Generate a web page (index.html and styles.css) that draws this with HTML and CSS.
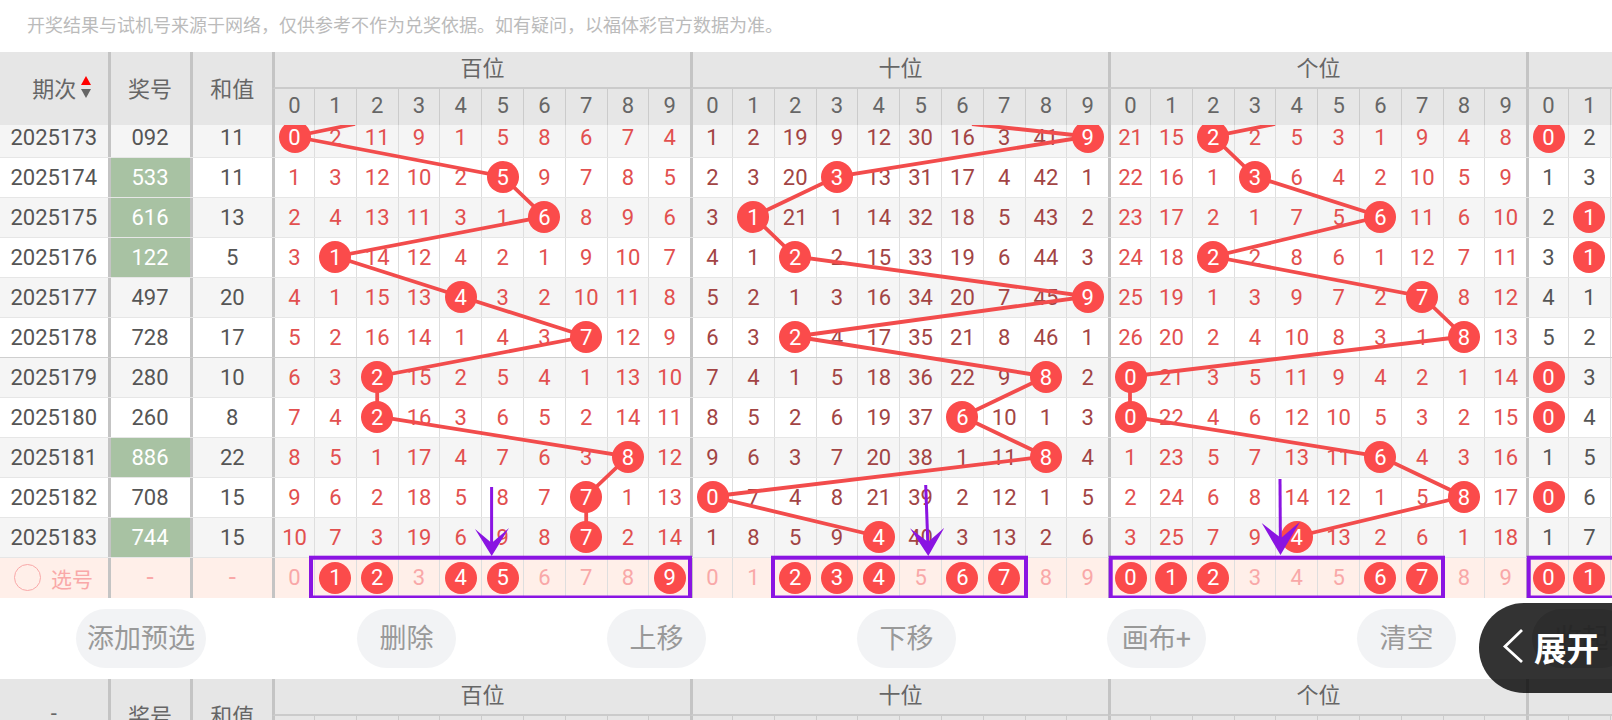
FILE: index.html
```html
<!DOCTYPE html>
<html lang="zh">
<head>
<meta charset="utf-8">
<title>走势图</title>
<link rel="stylesheet" href="styles.css">
</head>
<body>
<p class="note">开奖结果与试机号来源于网络，仅供参考不作为兑奖依据。如有疑问，以福体彩官方数据为准。</p>

<section class="head">
  <div class="num"><span>期次</span><span class="sort"><i class="up"></i><i class="down"></i></span></div>
  <div class="win">奖号</div>
  <div class="sum">和值</div>
  <div class="group"><div class="gname">百位</div><div class="sec"><span>0</span><span>1</span><span>2</span><span>3</span><span>4</span><span>5</span><span>6</span><span>7</span><span>8</span><span>9</span></div></div>
  <div class="group"><div class="gname">十位</div><div class="sec"><span>0</span><span>1</span><span>2</span><span>3</span><span>4</span><span>5</span><span>6</span><span>7</span><span>8</span><span>9</span></div></div>
  <div class="group"><div class="gname">个位</div><div class="sec"><span>0</span><span>1</span><span>2</span><span>3</span><span>4</span><span>5</span><span>6</span><span>7</span><span>8</span><span>9</span></div></div>
  <div class="group"><div class="gname"></div><div class="sec"><span>0</span><span>1</span></div></div>
</section>

<div class="rows">
  <svg class="lines" viewBox="0 125 1612 472.5" width="1612" height="472.5" aria-hidden="true">
    <polyline points="355,124 294,136.5 502.6,176.5 544.4,216.5 335.4,256.5 460.8,296.5 586.2,336.5 377.2,376.5 377.2,416.5 628,456.5 586.2,496.5 586.2,536.5"/>
    <polyline points="972,124 1087.8,136.5 837,176.5 753.4,216.5 795.2,256.5 1087.8,296.5 795.2,336.5 1046,376.5 962.4,416.5 1046,456.5 712,496.5 878.8,536.5"/>
    <polyline points="1275,124 1213.2,136.5 1255,176.5 1380.4,216.5 1213.2,256.5 1422.2,296.5 1464,336.5 1130,376.5 1130,416.5 1380.4,456.5 1464,496.5 1296.8,536.5"/>
  </svg>
  <svg class="marks" viewBox="0 125 1612 472.5" width="1612" height="472.5" aria-hidden="true">
    <rect x="311" y="557.7" width="379" height="39.8"/>
    <rect x="773" y="557.7" width="253" height="39.8"/>
    <rect x="1110.7" y="557.7" width="332.3" height="39.8"/>
    <rect x="1528.7" y="557.7" width="172" height="39.8"/>
    <line x1="491.6" y1="487" x2="491.6" y2="548"/>
    <polygon points="475,529 491.7,556 509,528 491.7,543"/>
    <line x1="925.7" y1="485" x2="928" y2="548"/>
    <polygon points="910,528.3 928.3,556 944.3,527.7 928,542"/>
    <line x1="1280" y1="479" x2="1280.4" y2="546"/>
    <polygon points="1261.7,523 1280.5,555 1300,521.7 1281,538"/>
  </svg>
  <div class="scroll">
    <div class="row"><div class="num">2025173</div><div class="win">092</div><div class="sum">11</div><div class="sec"><span><b>0</b></span><span>2</span><span>11</span><span>9</span><span>1</span><span>5</span><span>8</span><span>6</span><span>7</span><span>4</span></div><div class="sec dark"><span>1</span><span>2</span><span>19</span><span>9</span><span>12</span><span>30</span><span>16</span><span>3</span><span>41</span><span><b>9</b></span></div><div class="sec"><span>21</span><span>15</span><span><b>2</b></span><span>2</span><span>5</span><span>3</span><span>1</span><span>9</span><span>4</span><span>8</span></div><div class="sec gray"><span><b>0</b></span><span>2</span></div></div>
    <div class="row"><div class="num">2025174</div><div class="win hit">533</div><div class="sum">11</div><div class="sec"><span>1</span><span>3</span><span>12</span><span>10</span><span>2</span><span><b>5</b></span><span>9</span><span>7</span><span>8</span><span>5</span></div><div class="sec dark"><span>2</span><span>3</span><span>20</span><span><b>3</b></span><span>13</span><span>31</span><span>17</span><span>4</span><span>42</span><span>1</span></div><div class="sec"><span>22</span><span>16</span><span>1</span><span><b>3</b></span><span>6</span><span>4</span><span>2</span><span>10</span><span>5</span><span>9</span></div><div class="sec gray"><span>1</span><span>3</span></div></div>
    <div class="row"><div class="num">2025175</div><div class="win hit">616</div><div class="sum">13</div><div class="sec"><span>2</span><span>4</span><span>13</span><span>11</span><span>3</span><span>1</span><span><b>6</b></span><span>8</span><span>9</span><span>6</span></div><div class="sec dark"><span>3</span><span><b>1</b></span><span>21</span><span>1</span><span>14</span><span>32</span><span>18</span><span>5</span><span>43</span><span>2</span></div><div class="sec"><span>23</span><span>17</span><span>2</span><span>1</span><span>7</span><span>5</span><span><b>6</b></span><span>11</span><span>6</span><span>10</span></div><div class="sec gray"><span>2</span><span><b>1</b></span></div></div>
    <div class="row"><div class="num">2025176</div><div class="win hit">122</div><div class="sum">5</div><div class="sec"><span>3</span><span><b>1</b></span><span>14</span><span>12</span><span>4</span><span>2</span><span>1</span><span>9</span><span>10</span><span>7</span></div><div class="sec dark"><span>4</span><span>1</span><span><b>2</b></span><span>2</span><span>15</span><span>33</span><span>19</span><span>6</span><span>44</span><span>3</span></div><div class="sec"><span>24</span><span>18</span><span><b>2</b></span><span>2</span><span>8</span><span>6</span><span>1</span><span>12</span><span>7</span><span>11</span></div><div class="sec gray"><span>3</span><span><b>1</b></span></div></div>
    <div class="row"><div class="num">2025177</div><div class="win">497</div><div class="sum">20</div><div class="sec"><span>4</span><span>1</span><span>15</span><span>13</span><span><b>4</b></span><span>3</span><span>2</span><span>10</span><span>11</span><span>8</span></div><div class="sec dark"><span>5</span><span>2</span><span>1</span><span>3</span><span>16</span><span>34</span><span>20</span><span>7</span><span>45</span><span><b>9</b></span></div><div class="sec"><span>25</span><span>19</span><span>1</span><span>3</span><span>9</span><span>7</span><span>2</span><span><b>7</b></span><span>8</span><span>12</span></div><div class="sec gray"><span>4</span><span>1</span></div></div>
    <div class="row fifth"><div class="num">2025178</div><div class="win">728</div><div class="sum">17</div><div class="sec"><span>5</span><span>2</span><span>16</span><span>14</span><span>1</span><span>4</span><span>3</span><span><b>7</b></span><span>12</span><span>9</span></div><div class="sec dark"><span>6</span><span>3</span><span><b>2</b></span><span>4</span><span>17</span><span>35</span><span>21</span><span>8</span><span>46</span><span>1</span></div><div class="sec"><span>26</span><span>20</span><span>2</span><span>4</span><span>10</span><span>8</span><span>3</span><span>1</span><span><b>8</b></span><span>13</span></div><div class="sec gray"><span>5</span><span>2</span></div></div>
    <div class="row"><div class="num">2025179</div><div class="win">280</div><div class="sum">10</div><div class="sec"><span>6</span><span>3</span><span><b>2</b></span><span>15</span><span>2</span><span>5</span><span>4</span><span>1</span><span>13</span><span>10</span></div><div class="sec dark"><span>7</span><span>4</span><span>1</span><span>5</span><span>18</span><span>36</span><span>22</span><span>9</span><span><b>8</b></span><span>2</span></div><div class="sec"><span><b>0</b></span><span>21</span><span>3</span><span>5</span><span>11</span><span>9</span><span>4</span><span>2</span><span>1</span><span>14</span></div><div class="sec gray"><span><b>0</b></span><span>3</span></div></div>
    <div class="row"><div class="num">2025180</div><div class="win">260</div><div class="sum">8</div><div class="sec"><span>7</span><span>4</span><span><b>2</b></span><span>16</span><span>3</span><span>6</span><span>5</span><span>2</span><span>14</span><span>11</span></div><div class="sec dark"><span>8</span><span>5</span><span>2</span><span>6</span><span>19</span><span>37</span><span><b>6</b></span><span>10</span><span>1</span><span>3</span></div><div class="sec"><span><b>0</b></span><span>22</span><span>4</span><span>6</span><span>12</span><span>10</span><span>5</span><span>3</span><span>2</span><span>15</span></div><div class="sec gray"><span><b>0</b></span><span>4</span></div></div>
    <div class="row"><div class="num">2025181</div><div class="win hit">886</div><div class="sum">22</div><div class="sec"><span>8</span><span>5</span><span>1</span><span>17</span><span>4</span><span>7</span><span>6</span><span>3</span><span><b>8</b></span><span>12</span></div><div class="sec dark"><span>9</span><span>6</span><span>3</span><span>7</span><span>20</span><span>38</span><span>1</span><span>11</span><span><b>8</b></span><span>4</span></div><div class="sec"><span>1</span><span>23</span><span>5</span><span>7</span><span>13</span><span>11</span><span><b>6</b></span><span>4</span><span>3</span><span>16</span></div><div class="sec gray"><span>1</span><span>5</span></div></div>
    <div class="row"><div class="num">2025182</div><div class="win">708</div><div class="sum">15</div><div class="sec"><span>9</span><span>6</span><span>2</span><span>18</span><span>5</span><span>8</span><span>7</span><span><b>7</b></span><span>1</span><span>13</span></div><div class="sec dark"><span><b>0</b></span><span>7</span><span>4</span><span>8</span><span>21</span><span>39</span><span>2</span><span>12</span><span>1</span><span>5</span></div><div class="sec"><span>2</span><span>24</span><span>6</span><span>8</span><span>14</span><span>12</span><span>1</span><span>5</span><span><b>8</b></span><span>17</span></div><div class="sec gray"><span><b>0</b></span><span>6</span></div></div>
    <div class="row"><div class="num">2025183</div><div class="win hit">744</div><div class="sum">15</div><div class="sec"><span>10</span><span>7</span><span>3</span><span>19</span><span>6</span><span>9</span><span>8</span><span><b>7</b></span><span>2</span><span>14</span></div><div class="sec dark"><span>1</span><span>8</span><span>5</span><span>9</span><span><b>4</b></span><span>40</span><span>3</span><span>13</span><span>2</span><span>6</span></div><div class="sec"><span>3</span><span>25</span><span>7</span><span>9</span><span><b>4</b></span><span>13</span><span>2</span><span>6</span><span>1</span><span>18</span></div><div class="sec gray"><span>1</span><span>7</span></div></div>
    <div class="row pick"><div class="num"><i class="ring"></i>选号</div><div class="win">-</div><div class="sum">-</div><div class="sec"><span>0</span><span><b>1</b></span><span><b>2</b></span><span>3</span><span><b>4</b></span><span><b>5</b></span><span>6</span><span>7</span><span>8</span><span><b>9</b></span></div><div class="sec"><span>0</span><span>1</span><span><b>2</b></span><span><b>3</b></span><span><b>4</b></span><span>5</span><span><b>6</b></span><span><b>7</b></span><span>8</span><span>9</span></div><div class="sec"><span><b>0</b></span><span><b>1</b></span><span><b>2</b></span><span>3</span><span>4</span><span>5</span><span><b>6</b></span><span><b>7</b></span><span>8</span><span>9</span></div><div class="sec"><span><b>0</b></span><span><b>1</b></span></div></div>
  </div>
</div>

<div class="actions">
  <button class="btn wide">添加预选</button>
  <button class="btn">删除</button>
  <button class="btn">上移</button>
  <button class="btn">下移</button>
  <button class="btn">画布+</button>
  <button class="btn">清空</button>
  <button class="btn last">收起</button>
</div>

<section class="head">
  <div class="num">-</div>
  <div class="win">奖号</div>
  <div class="sum">和值</div>
  <div class="group"><div class="gname">百位</div><div class="sec"><span>0</span><span>1</span><span>2</span><span>3</span><span>4</span><span>5</span><span>6</span><span>7</span><span>8</span><span>9</span></div></div>
  <div class="group"><div class="gname">十位</div><div class="sec"><span>0</span><span>1</span><span>2</span><span>3</span><span>4</span><span>5</span><span>6</span><span>7</span><span>8</span><span>9</span></div></div>
  <div class="group"><div class="gname">个位</div><div class="sec"><span>0</span><span>1</span><span>2</span><span>3</span><span>4</span><span>5</span><span>6</span><span>7</span><span>8</span><span>9</span></div></div>
  <div class="group"><div class="gname"></div><div class="sec"><span>0</span><span>1</span></div></div>
</section>

<div class="pill">
  <svg viewBox="0 0 22 36" width="22" height="36" aria-hidden="true"><path d="M20 2 L3 18.5 L20 34"/></svg>
  <span>展开</span>
</div>
</body>
</html>
```

FILE: styles.css
```css
* { box-sizing: border-box; }
html, body { margin: 0; padding: 0; height: 720px; overflow: hidden; background: #fff; }
body {
  position: relative;
  width: 1612px;
  font-family: Roboto, "Noto Sans CJK SC", sans-serif;
  font-size: 22px;
  color: #555;
}
.note {
  margin: 0;
  height: 52px;
  padding-left: 27px;
  font-size: 18px;
  line-height: 51px;
  color: #bbb;
  white-space: nowrap;
}

/* shared columns */
.head, .row { display: flex; width: 1612px; overflow: hidden; }
.num, .win, .sum {
  flex: none;
  display: flex;
  align-items: center;
  justify-content: center;
}
.num { width: 107.5px; }
.win { width: 82px; border-left: 3.5px solid #c4c4c4; }
.sum { width: 82.5px; border-left: 3.5px solid #c4c4c4; }
.sec {
  flex: none;
  display: grid;
  grid-template-columns: 43px repeat(8, 41.8px) 40.6px;
  width: 418px;
}
.sec > span {
  display: flex;
  align-items: center;
  justify-content: center;
  border-right: 1.5px solid #dedede;
}
.sec > span:first-child { border-left: 3px solid #c4c4c4; }
.sec > span:nth-child(10) { border-right: 0; }

/* header */
.head { height: 73px; background: #e6e6e6; color: #666; }
.head .num, .head .win, .head .sum { padding-bottom: 4px; }
.group { flex: none; width: 418px; display: flex; flex-direction: column; }
.gname {
  height: 37px;
  border-left: 3px solid #c4c4c4;
  border-bottom: 2px solid #cbcbcb;
  text-align: center;
  line-height: 33px;
}
.head .sec { height: 36px; }
.head .sec > span { border-right-color: #cbcbcb; padding-bottom: 3px; }
.num > span:first-child { margin-left: 16px; }
.sort { display: flex; flex-direction: column; gap: 4px; margin-left: 5px; }
.sort i { display: block; width: 0; height: 0; border-left: 5.5px solid transparent; border-right: 5.5px solid transparent; }
.sort .up { border-bottom: 9px solid #f00; }
.sort .down { border-top: 9px solid #666; }

/* rows */
.rows { position: relative; height: 472.5px; overflow: hidden; }
.scroll { margin-top: -7.5px; }
.row { height: 40px; border-bottom: 1.5px solid #e6e6e6; background: #fff; }
.row:nth-child(odd) { background: #f5f5f5; }
.row.fifth { border-bottom-color: #cfcfcf; }
.row .sec { color: #e2504f; }
.row .sec.dark { color: #a24444; }
.row .sec.gray { color: #555; }
.win.hit { background-clip: padding-box; background-color: #a8c2a3; color: #fff; }
.sec b {
  position: relative;
  z-index: 2;
  display: flex;
  align-items: center;
  justify-content: center;
  width: 32px;
  height: 32px;
  border-radius: 50%;
  background: #fb4b4b;
  color: #fff;
  font-weight: 400;
}
.lines, .marks { position: absolute; left: 0; top: 0; }
.lines { z-index: 1; }
.lines polyline { fill: none; stroke: #f24c4c; stroke-width: 3.8; }
.marks { z-index: 3; }
.marks rect { fill: none; stroke: #8a14e2; stroke-width: 4; }
.marks line { stroke: #8a14e2; stroke-width: 3; }
.marks polygon { fill: #8a14e2; }

/* pick row */
.row.pick { background: #ffefe9; border-bottom: 0; color: #f9a8a8; }
.row.pick .sec { color: #f9a8a8; }
.row.pick .num { font-size: 21px; justify-content: flex-start; padding-left: 14px; }
.row.pick .win, .row.pick .sum { font-size: 26px; padding-bottom: 2px; }
.ring {
  width: 27px;
  height: 27px;
  margin-right: 10px;
  border: 1.5px solid #f9a8a8;
  border-radius: 50%;
}

/* actions */
.actions {
  display: flex;
  align-items: center;
  gap: 151px;
  height: 81.5px;
  padding: 0 0 0 76px;
  width: 1800px;
}
.btn {
  flex: none;
  width: 99px;
  height: 59px;
  padding: 0 0 3px;
  border: 0;
  border-radius: 30px;
  background: #f2f3f5;
  color: #999;
  font: inherit;
  font-size: 27px;
}
.btn.wide { width: 130px; }
.btn.last { margin-left: -75px; background: #dedede; color: #c8c8c8; }

/* floating */
.pill {
  position: absolute;
  right: 0;
  top: 603px;
  z-index: 10;
  display: flex;
  align-items: center;
  width: 133px;
  height: 90px;
  padding: 0 0 4px 23px;
  gap: 10px;
  border-radius: 45px 0 0 45px;
  background: rgba(0, 0, 0, .8);
  color: #fff;
  font-family: "Noto Sans CJK SC", sans-serif;
  font-size: 32.5px;
  font-weight: 700;
}
.pill svg { flex: none; }
.pill path { fill: none; stroke: #fff; stroke-width: 2.8; }
```
